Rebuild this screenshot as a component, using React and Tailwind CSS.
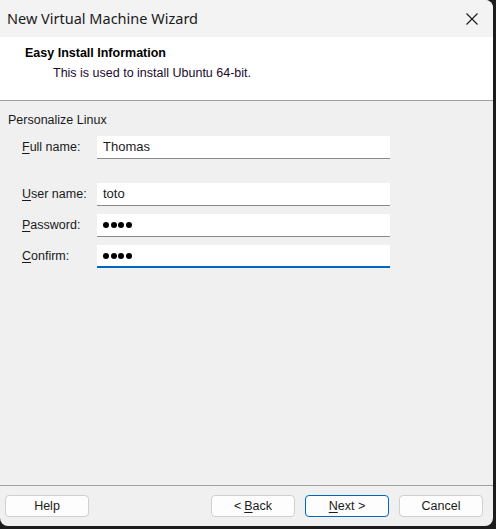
export default function App() {
  const font = { fontFamily: '"Liberation Sans", Arial, sans-serif' };
  const Dots = () => (
    <div className="flex items-center gap-[1.5px]">
      {[0, 1, 2, 3].map((i) => (
        <span key={i} className="block w-[6px] h-[6px] rounded-full bg-black" />
      ))}
    </div>
  );
  const Field = ({ label, u, children, active, mt }) => (
    <div className={`flex items-center ${mt}`}>
      <div className="w-[97px] shrink-0 whitespace-nowrap pl-[22px] text-[12.5px] text-[#1a1a1a]">
        <span className="underline underline-offset-2">{u}</span>
        {label}
      </div>
      <div
        className={`w-[293px] shrink-0 h-[23px] bg-white flex items-center pl-[6px] text-[13px] text-[#1b1b1b] ${
          active ? 'border-b-2 border-[#0067c0]' : 'border-b border-[#8a8a8a]'
        }`}
      >
        {children}
      </div>
    </div>
  );
  const Btn = ({ children, primary }) => (
    <div
      className={`w-[84px] h-[22px] rounded-[4px] flex items-center justify-center text-[12.5px] text-[#1b1b1b] bg-[#fdfdfd] border ${
        primary ? 'border-[#0067c0]' : 'border-[#d0d0d0]'
      }`}
    >
      {children}
    </div>
  );
  return (
    <div className="w-[496px] h-[529px] bg-[#1c1c1c]" style={font}>
      <div className="w-[493px] h-[526px] bg-[#f0f0f0] rounded-tr-[8px] rounded-b-[8px] overflow-hidden flex flex-col">
        <div className="h-[37px] bg-[#f3f3f3] flex items-center justify-between pl-[7px] pr-[15px]">
          <span className="text-[14.5px] text-[#1a1a1a]" style={{ fontFamily: '"Noto Sans", "Open Sans", sans-serif' }}>
            New Virtual Machine Wizard
          </span>
          <svg width="12" height="12" viewBox="0 0 12 12" className="mt-[1px]">
            <path d="M0.5 0.5 L11.5 11.5 M11.5 0.5 L0.5 11.5" stroke="#1a1a1a" strokeWidth="1.1" fill="none" />
          </svg>
        </div>
        <div className="h-[64px] bg-white border-b border-[#a0a0a0] pt-[9px]">
          <div className="pl-[25px] text-[12.5px] font-bold text-[#000000] leading-[15px]">Easy Install Information</div>
          <div className="pl-[53px] mt-[5px] text-[12.5px] text-[#1a0a30] leading-[15px]">This is used to install Ubuntu 64-bit.</div>
        </div>
        <div className="flex-1 flex flex-col">
          <div className="pl-[8px] pt-[12px] text-[12.5px] text-[#1a1a1a] leading-[14px]">Personalize Linux</div>
          <Field label="ull name:" u="F" mt="mt-[9px]">Thomas</Field>
          <Field label="ser name:" u="U" mt="mt-[24px]">toto</Field>
          <Field label="assword:" u="P" mt="mt-[8px]"><Dots /></Field>
          <Field label="onfirm:" u="C" mt="mt-[8px]" active><Dots /></Field>
          <div className="flex-1" />
          <div className="border-t border-[#a0a0a0] h-[1px]" />
          <div className="h-[40px] flex items-start pt-[9px] pl-[5px]">
            <Btn>Help</Btn>
            <div className="flex-1" />
            <div className="flex gap-[10px] pr-[10px]">
              <Btn>&lt; <span className="underline underline-offset-2 ml-[3px]">B</span>ack</Btn>
              <Btn primary><span className="underline underline-offset-2">N</span>ext &gt;</Btn>
              <Btn>Cancel</Btn>
            </div>
          </div>
        </div>
      </div>
    </div>
  );
}
